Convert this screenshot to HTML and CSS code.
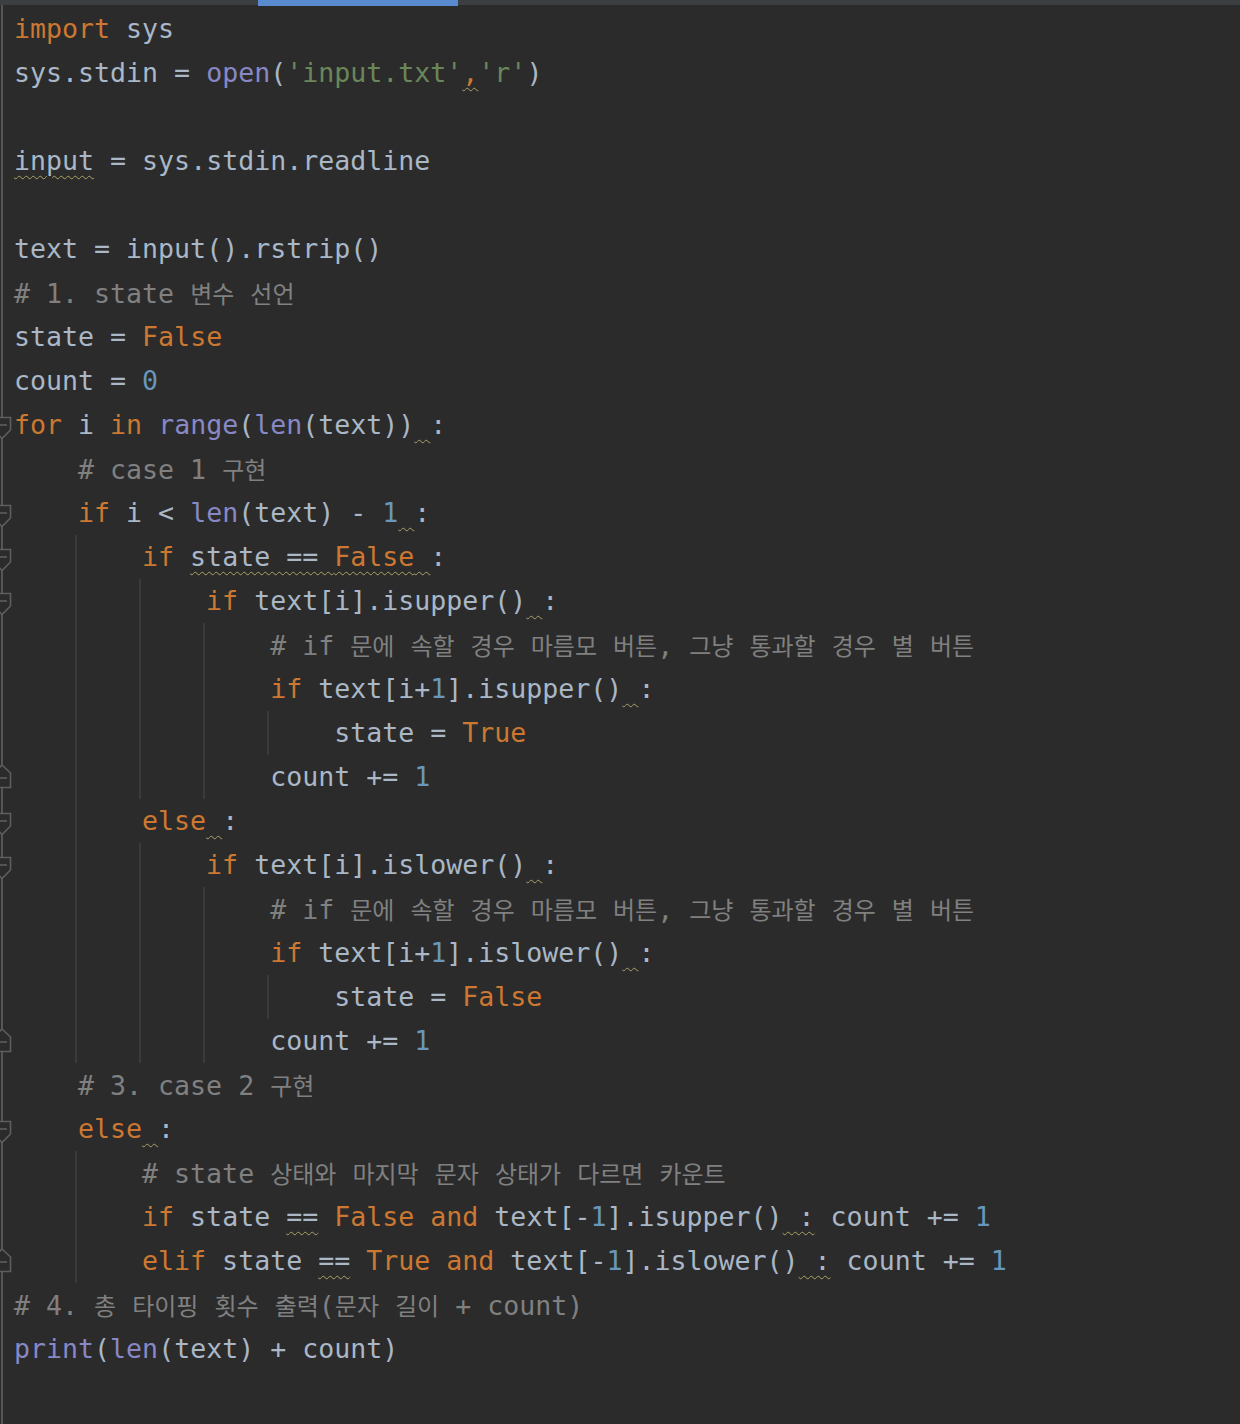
FILE: index.html
```html
<!DOCTYPE html>
<html>
<head>
<meta charset="utf-8">
<link rel="stylesheet" href="styles.css">
</head>
<body>
<div class="tabs"><div class="tab-active"></div></div>
<div class="editor">
<div class="row"><div class="gut"></div><div class="t"><span class="k">import</span> sys</div></div>
<div class="row"><div class="gut"></div><div class="t">sys.stdin = <span class="b">open</span>(<span class="s">'input.txt'</span><span class="k w">,</span><span class="s">'r'</span>)</div></div>
<div class="row"><div class="gut"></div><div class="t"></div></div>
<div class="row"><div class="gut"></div><div class="t"><span class="w">input</span> = sys.stdin.readline</div></div>
<div class="row"><div class="gut"></div><div class="t"></div></div>
<div class="row"><div class="gut"></div><div class="t">text = input().rstrip()</div></div>
<div class="row"><div class="gut"></div><div class="t"><span class="c"># 1. state <span class="ko">변수</span> <span class="ko">선언</span></span></div></div>
<div class="row"><div class="gut"></div><div class="t">state = <span class="k">False</span></div></div>
<div class="row"><div class="gut"></div><div class="t">count = <span class="n">0</span></div></div>
<div class="row"><div class="gut"><svg class="fold" width="14" height="44" viewBox="0 0 14 44"><path d="M-6 14.5H10.5V27L2 35.5L-6 27Z"/><path d="M0 22H7"/></svg></div><div class="t"><span class="k">for</span> i <span class="k">in</span> <span class="b">range</span>(<span class="b">len</span>(text))<span class="w"> </span>:</div></div>
<div class="row"><div class="gut"></div><div class="t"><span class="i"></span><span class="c"># case 1 <span class="ko">구현</span></span></div></div>
<div class="row"><div class="gut"><svg class="fold" width="14" height="44" viewBox="0 0 14 44"><path d="M-6 14.5H10.5V27L2 35.5L-6 27Z"/><path d="M0 22H7"/></svg></div><div class="t"><span class="i"></span><span class="k">if</span> i &lt; <span class="b">len</span>(text) - <span class="n">1</span><span class="w"> </span>:</div></div>
<div class="row"><div class="gut"><svg class="fold" width="14" height="44" viewBox="0 0 14 44"><path d="M-6 14.5H10.5V27L2 35.5L-6 27Z"/><path d="M0 22H7"/></svg></div><div class="t"><span class="i g"></span><span class="i"></span><span class="k">if</span> <span class="w">state == <span class="k">False</span> </span>:</div></div>
<div class="row"><div class="gut"><svg class="fold" width="14" height="44" viewBox="0 0 14 44"><path d="M-6 14.5H10.5V27L2 35.5L-6 27Z"/><path d="M0 22H7"/></svg></div><div class="t"><span class="i g"></span><span class="i g"></span><span class="i"></span><span class="k">if</span> text[i].isupper()<span class="w"> </span>:</div></div>
<div class="row"><div class="gut"></div><div class="t"><span class="i g"></span><span class="i g"></span><span class="i g"></span><span class="i"></span><span class="c"># if <span class="ko">문에</span> <span class="ko">속할</span> <span class="ko">경우</span> <span class="ko">마름모</span> <span class="ko">버튼</span>, <span class="ko">그냥</span> <span class="ko">통과할</span> <span class="ko">경우</span> <span class="ko">별</span> <span class="ko">버튼</span></span></div></div>
<div class="row"><div class="gut"></div><div class="t"><span class="i g"></span><span class="i g"></span><span class="i g"></span><span class="i"></span><span class="k">if</span> text[i+<span class="n">1</span>].isupper()<span class="w"> </span>:</div></div>
<div class="row"><div class="gut"></div><div class="t"><span class="i g"></span><span class="i g"></span><span class="i g"></span><span class="i g"></span><span class="i"></span>state = <span class="k">True</span></div></div>
<div class="row"><div class="gut"><svg class="fold" width="14" height="44" viewBox="0 0 14 44"><path d="M-6 18L2 10L10.5 18V32.5H-6Z"/><path d="M0 23H7"/></svg></div><div class="t"><span class="i g"></span><span class="i g"></span><span class="i g"></span><span class="i"></span>count += <span class="n">1</span></div></div>
<div class="row"><div class="gut"><svg class="fold" width="14" height="44" viewBox="0 0 14 44"><path d="M-6 14.5H10.5V27L2 35.5L-6 27Z"/><path d="M0 22H7"/></svg></div><div class="t"><span class="i g"></span><span class="i"></span><span class="k">else</span><span class="w"> </span>:</div></div>
<div class="row"><div class="gut"><svg class="fold" width="14" height="44" viewBox="0 0 14 44"><path d="M-6 14.5H10.5V27L2 35.5L-6 27Z"/><path d="M0 22H7"/></svg></div><div class="t"><span class="i g"></span><span class="i g"></span><span class="i"></span><span class="k">if</span> text[i].islower()<span class="w"> </span>:</div></div>
<div class="row"><div class="gut"></div><div class="t"><span class="i g"></span><span class="i g"></span><span class="i g"></span><span class="i"></span><span class="c"># if <span class="ko">문에</span> <span class="ko">속할</span> <span class="ko">경우</span> <span class="ko">마름모</span> <span class="ko">버튼</span>, <span class="ko">그냥</span> <span class="ko">통과할</span> <span class="ko">경우</span> <span class="ko">별</span> <span class="ko">버튼</span></span></div></div>
<div class="row"><div class="gut"></div><div class="t"><span class="i g"></span><span class="i g"></span><span class="i g"></span><span class="i"></span><span class="k">if</span> text[i+<span class="n">1</span>].islower()<span class="w"> </span>:</div></div>
<div class="row"><div class="gut"></div><div class="t"><span class="i g"></span><span class="i g"></span><span class="i g"></span><span class="i g"></span><span class="i"></span>state = <span class="k">False</span></div></div>
<div class="row"><div class="gut"><svg class="fold" width="14" height="44" viewBox="0 0 14 44"><path d="M-6 18L2 10L10.5 18V32.5H-6Z"/><path d="M0 23H7"/></svg></div><div class="t"><span class="i g"></span><span class="i g"></span><span class="i g"></span><span class="i"></span>count += <span class="n">1</span></div></div>
<div class="row"><div class="gut"></div><div class="t"><span class="i"></span><span class="c"># 3. case 2 <span class="ko">구현</span></span></div></div>
<div class="row"><div class="gut"><svg class="fold" width="14" height="44" viewBox="0 0 14 44"><path d="M-6 14.5H10.5V27L2 35.5L-6 27Z"/><path d="M0 22H7"/></svg></div><div class="t"><span class="i"></span><span class="k">else</span><span class="w"> </span>:</div></div>
<div class="row"><div class="gut"></div><div class="t"><span class="i g"></span><span class="i"></span><span class="c"># state <span class="ko">상태와</span> <span class="ko">마지막</span> <span class="ko">문자</span> <span class="ko">상태가</span> <span class="ko">다르면</span> <span class="ko">카운트</span></span></div></div>
<div class="row"><div class="gut"></div><div class="t"><span class="i g"></span><span class="i"></span><span class="k">if</span> state <span class="w">==</span> <span class="k">False</span> <span class="k">and</span> text[-<span class="n">1</span>].isupper()<span class="w"> :</span> count += <span class="n">1</span></div></div>
<div class="row"><div class="gut"><svg class="fold" width="14" height="44" viewBox="0 0 14 44"><path d="M-6 18L2 10L10.5 18V32.5H-6Z"/><path d="M0 23H7"/></svg></div><div class="t"><span class="i g"></span><span class="i"></span><span class="k">elif</span> state <span class="w">==</span> <span class="k">True</span> <span class="k">and</span> text[-<span class="n">1</span>].islower()<span class="w"> :</span> count += <span class="n">1</span></div></div>
<div class="row"><div class="gut"></div><div class="t"><span class="c"># 4. <span class="ko">총</span> <span class="ko">타이핑</span> <span class="ko">횟수</span> <span class="ko">출력</span>(<span class="ko">문자</span> <span class="ko">길이</span> + count)</span></div></div>
<div class="row"><div class="gut"></div><div class="t"><span class="b">print</span>(<span class="b">len</span>(text) + count)</div></div>
</div>
</body>
</html>
```

FILE: styles.css
```css
html, body {
  margin: 0;
  padding: 0;
  background: #2b2b2b;
}
body {
  width: 1240px;
  height: 1424px;
  overflow: hidden;
  font-family: "DejaVu Sans Mono", "Liberation Mono", monospace;
  font-size: 26.6px;
  color: #a9b7c6;
}
.tabs {
  height: 5px;
  background: #3c3f41;
  display: flex;
}
.tab-active {
  margin-left: 258px;
  width: 200px;
  height: 6px;
  flex: none;
  background: #5a8ad0;
}
.editor {
  padding-top: 2px;
  min-height: 1417px;
  background: linear-gradient(to right, transparent 1px, #555555 1px, #555555 3px, transparent 3px) no-repeat;
}
.row {
  display: flex;
  height: 44px;
}
.gut {
  width: 14px;
  flex: none;
}
.fold {
  display: block;
}
.fold path {
  fill: #2b2b2b;
  stroke: #5e5e5e;
  stroke-width: 1.6;
}
.t {
  white-space: pre;
  line-height: 44px;
  height: 44px;
}
.i {
  display: inline-block;
  width: 4ch;
  height: 44px;
  vertical-align: top;
}
.i.g {
  background: linear-gradient(to right, transparent calc(100% - 3px), #3a3a3a calc(100% - 3px), #3a3a3a calc(100% - 1px), transparent calc(100% - 1px));
}
.k { color: #cc7832; }
.b { color: #8888c6; }
.s { color: #6a8759; }
.n { color: #6897bb; }
.c { color: #808080; }
.w {
  text-decoration: underline wavy #a9a465;
  text-decoration-thickness: 1.2px;
  text-underline-offset: 5px;
}
.ko {
  font-family: "Noto Sans CJK KR", sans-serif;
  font-size: 24px;
}
```
